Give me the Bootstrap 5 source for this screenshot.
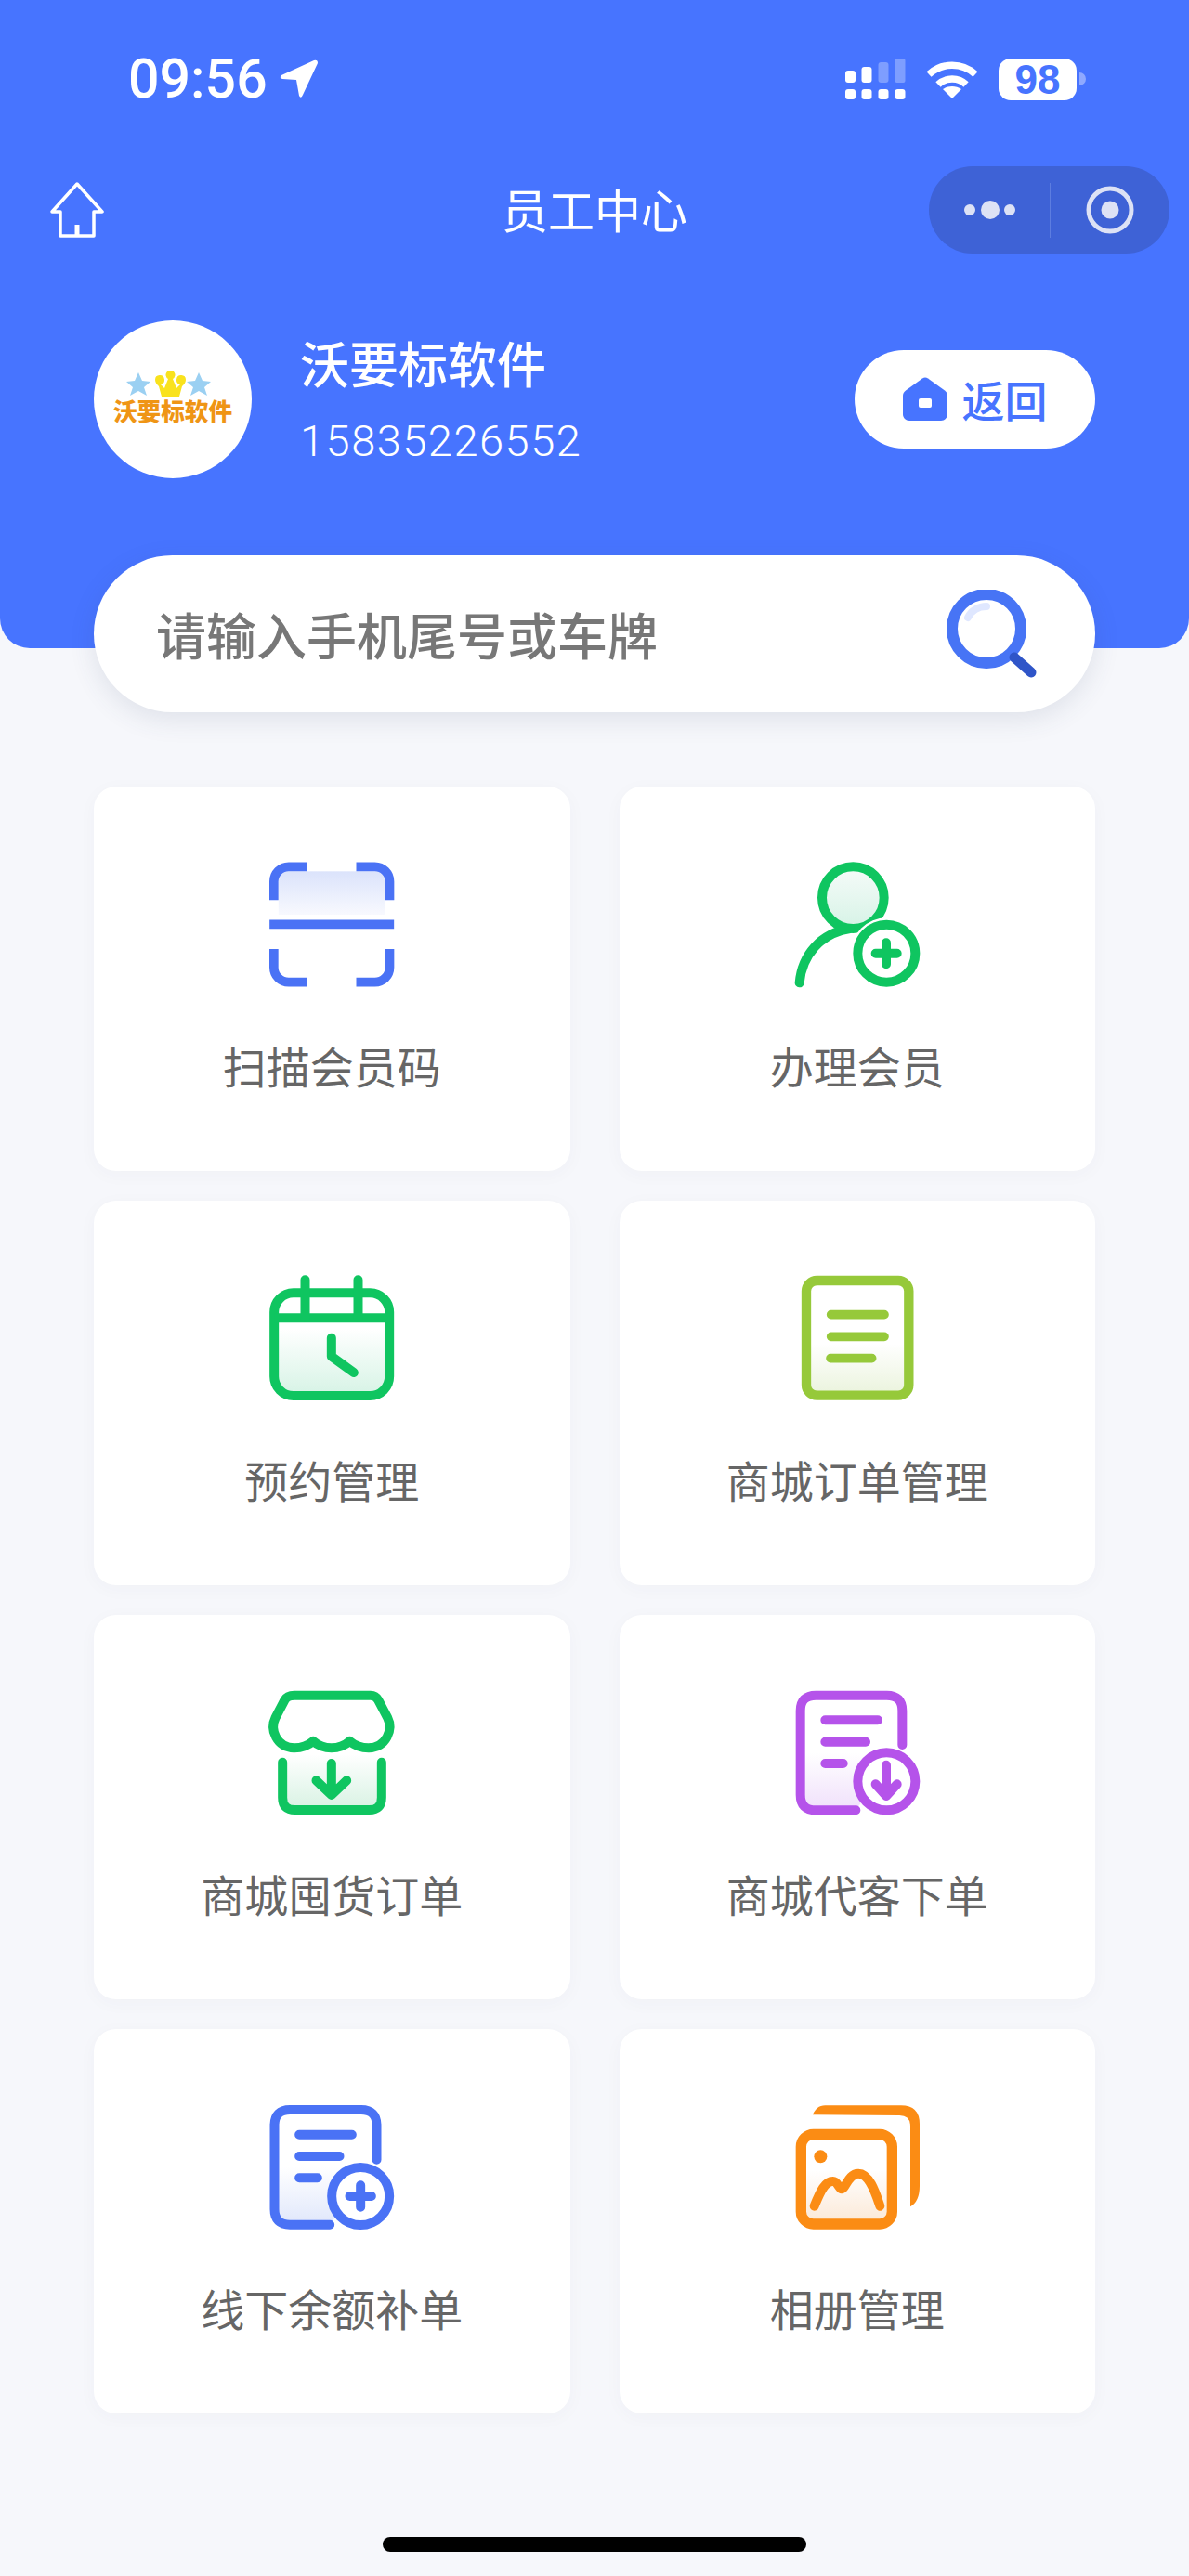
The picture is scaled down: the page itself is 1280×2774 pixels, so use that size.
<!doctype html>
<html lang="zh-CN">
<head>
    <meta charset="utf-8">
    <meta name="viewport" content="width=device-width, initial-scale=1">
    <title>员工中心</title>
    <link href="https://cdn.jsdelivr.net/npm/bootstrap@5.3.3/dist/css/bootstrap.min.css" rel="stylesheet">
    <style>
        body {
            background-color: #f6f7fb;
            font-family: "Noto Sans CJK SC", "Liberation Sans", sans-serif;
        }
        .top-panel {
            height: 698px;
            background-color: #4774ff;
            border-radius: 0 0 32px 32px;
            color: #fff;
        }
        /* status bar */
        .status-row {
            height: 50px;
            padding: 60px 111px 0 138px;
            box-sizing: content-box;
        }
        .status-time {
            font-family: Roboto, "Liberation Sans", sans-serif;
            font-weight: 500;
            font-size: 59px;
            line-height: 50px;
        }
        .status-arrow {
            margin-left: 13px;
        }
        .status-gap {
            margin-right: 21px;
        }
        .battery-body {
            width: 84px;
            height: 45px;
            background-color: #fff;
            border-radius: 13px;
            color: #4774ff;
            font-family: "Liberation Sans", sans-serif;
            font-weight: 700;
            font-size: 44px;
            line-height: 45px;
            text-align: center;
        }
        .battery-nub {
            width: 7px;
            height: 14px;
            margin-left: 3px;
            border-radius: 0 7px 7px 0;
            background-color: #8fa9ff;
        }
        /* title row */
        .title-row {
            display: grid;
            grid-template-columns: 1fr auto 1fr;
            align-items: center;
            height: 94px;
            margin-top: 69px;
            padding: 0 21px;
        }
        .back-home {
            margin-left: 33px;
        }
        .page-title {
            font-size: 50px;
            line-height: 60px;
            padding-bottom: 5px;
        }
        .mini-capsule {
            justify-self: end;
            width: 259px;
            height: 94px;
            background-color: #3e62d6;
            border-radius: 47px;
        }
        /* profile */
        .profile-row {
            height: 170px;
            margin-top: 72px;
            padding: 0 101px;
        }
        .avatar-disc {
            width: 170px;
            height: 170px;
            padding-bottom: 6px;
            background-color: #fff;
            border-radius: 50%;
            color: #ef9515;
            overflow: hidden;
        }
        .avatar-word {
            font-weight: 900;
            font-size: 25.6px;
            line-height: 26px;
            white-space: nowrap;
        }
        .profile-text {
            margin-left: 52px;
        }
        .profile-name {
            font-size: 53px;
            font-weight: 500;
            line-height: 64px;
        }
        .profile-phone {
            font-family: Roboto, "Liberation Sans", sans-serif;
            font-weight: 300;
            font-size: 47px;
            letter-spacing: 1.500px;
            line-height: 56px;
            margin-top: 25px;
        }
        .back-pill {
            width: 259px;
            height: 106px;
            background-color: #fff;
            border-radius: 53px;
            color: #4774ff;
            font-size: 46px;
            font-weight: 500;
            line-height: 1;
            padding: 0 0 2px;
            border: 0;
        }
        .back-pill:hover, .back-pill:active {
            background-color: #fff !important;
            color: #4774ff !important;
        }
        /* search */
        .search-box {
            height: 169px;
            margin: -100px 101px 0;
            padding: 0 61px 0 67px;
            background-color: #fff;
            border-radius: 85px;
            box-shadow: 0 8px 28px rgba(60, 70, 110, .12);
        }
        .search-input {
            border: 0;
            outline: 0;
            background: transparent;
            font-size: 54px;
            font-weight: 500;
            color: #777;
            padding: 0;
        }
        .search-input::placeholder {
            color: #777;
            opacity: 1;
        }
        /* menu */
        .menu-wrap {
            margin-top: 80px;
            padding: 0 101px;
        }
        .menu-grid {
            --bs-gutter-x: 53px;
            --bs-gutter-y: 32px;
        }
        .menu-card {
            height: 414px;
            border: 0;
            border-radius: 24px;
            padding-top: 43px;
            box-shadow: 0 4px 20px rgba(60, 70, 110, .03);
        }
        .menu-icon {
            display: block;
            width: 240px;
            height: 200px;
            margin: 0 auto;
        }
        .menu-label {
            margin-top: 27px;
            font-size: 47px;
            line-height: 60px;
            color: #666;
        }
        .home-indicator {
            width: 456px;
            height: 16px;
            margin: 133px auto 0;
            background-color: #000;
            border-radius: 8px;
        }
    </style>
</head>
<body>
    <header class="top-panel">
        <div class="status-row d-flex justify-content-between align-items-center">
            <div class="d-flex align-items-center">
                <span class="status-time">09:56</span>
                <svg class="status-arrow" width="41" height="42" viewBox="0 0 41 42"><path d="M37 1 2 17Q-1 20 3 21L18 22 21 39Q23 43 25 38L41 4Q41 0 37 1Z" fill="#fff"/></svg>
            </div>
            <div class="d-flex align-items-center">
                <svg width="65" height="44" viewBox="0 0 65 44" class="status-gap">
                    <g fill="#fff">
                        <rect x="0" y="13" width="11" height="13" rx="3"/><rect x="17.500" y="9" width="11" height="17" rx="3"/>
                        <rect x="35.500" y="4" width="11" height="22" rx="3" opacity=".3"/><rect x="53.500" y="0" width="11" height="26" rx="2" opacity=".3"/>
                        <rect x="0" y="33" width="11" height="11" rx="3"/><rect x="17.500" y="33" width="11" height="11" rx="3"/>
                        <rect x="35.500" y="33" width="11" height="11" rx="3"/><rect x="53.500" y="33" width="11" height="11" rx="3"/>
                    </g>
                </svg>
                <svg width="58" height="42" viewBox="0 0 58 42" class="status-gap">
                    <path d="M4 16C18 3 40 3 54 16M14 27C22 19 36 19 44 27" fill="none" stroke="#fff" stroke-width="7.500"/>
                    <path d="M29 42 19 32C25 28 33 28 39 32z" fill="#fff"/>
                </svg>
                <div class="battery-body">98</div>
                <div class="battery-nub"></div>
            </div>
        </div>

        <div class="title-row">
            <svg class="back-home" width="58" height="60" viewBox="0 0 58 60" fill="none" stroke="#fff" stroke-width="3.500" stroke-linejoin="round">
                <path d="M29 2 56 32H47V58H11V32H2z"/>
                <path d="M29 46V57" stroke-width="5"/>
            </svg>
            <div class="page-title">员工中心</div>
            <div class="mini-capsule">
                <svg class="d-block" width="259" height="94" viewBox="0 0 259 94">
                    <g fill="#dde2f5">
                        <circle cx="44" cy="47" r="6"/><circle cx="66" cy="47" r="10"/><circle cx="87" cy="47" r="6"/>
                        <circle cx="195" cy="47" r="9.500"/>
                    </g>
                    <rect x="130" y="18" width="1" height="59" fill="#5d7de0"/>
                    <circle cx="195" cy="47" r="23" fill="none" stroke="#dde2f5" stroke-width="5"/>
                </svg>
            </div>
        </div>

        <div class="profile-row d-flex align-items-center">
            <div class="avatar-disc d-flex flex-column align-items-center justify-content-center flex-shrink-0">
                <svg class="d-block" width="128" height="30" viewBox="0 0 128 30">
                    <path d="M27 2 31 11 40 12 33 18 36 27 27 22 18 27 21 18 14 12 23 11z" fill="#9bd0f2"/>
                    <path d="M92 2 96 11 105 12 98 18 101 27 92 22 83 27 86 18 79 12 88 11z" fill="#9bd0f2"/>
                    <path d="M45 10a5 5 0 1 1 6 5l4 4 4-10a5 5 0 1 1 5 0l4 10 4-4a5 5 0 1 1 6-5c0 3-2 5-4 7l-3 11H52l-3-11c-2-2-4-4-4-7z" fill="#f9e21d"/>
                </svg>
                <span class="avatar-word">沃要标软件</span>
            </div>
            <div class="profile-text flex-grow-1">
                <div class="profile-name">沃要标软件</div>
                <div class="profile-phone">15835226552</div>
            </div>
            <button type="button" class="btn back-pill d-flex align-items-center justify-content-center gap-3 flex-shrink-0">
                <svg width="48" height="48" viewBox="0 0 48 48">
                    <path d="M21 2.500 3 15.500C1 17 0 19 0 21V41c0 4 3 7 7 7H41c4 0 7-3 7-7V21c0-2-1-4-3-5.500L27 2.500c-2-1.300-4-1.300-6 0z" fill="#4774ff"/>
                    <rect x="17" y="24" width="14" height="10" rx="2" fill="#fff"/>
                </svg>
                <span>返回</span>
            </button>
        </div>
    </header>

    <form class="search-box d-flex align-items-center position-relative">
        <input class="search-input flex-grow-1" type="text" placeholder="请输入手机尾号或车牌">
        <svg width="100" height="96" viewBox="0 0 100 96" class="flex-shrink-0">
            <path d="M24 30C28 22 36 18 44 18" fill="none" stroke="#dfe7ff" stroke-width="8" stroke-linecap="round"/>
            <circle cx="44" cy="42" r="37" fill="none" stroke="#4774f5" stroke-width="12"/>
            <path d="M74 73 92 89" stroke="#2f55c8" stroke-width="11" stroke-linecap="round"/>
        </svg>
    </form>

    <main class="menu-wrap">
        <div class="row menu-grid">
            <div class="col-6">
                <div class="card menu-card text-center">
                    <svg class="menu-icon" viewBox="-7.500 0 720 600">
                        <defs>
                            <linearGradient id="gradScan" x1="0" y1="0" x2="0" y2="1"><stop offset="0" stop-color="#dbe3fb"/><stop offset="1" stop-color="#f8f9fe"/></linearGradient>
                        </defs>
                        <rect x="181" y="145" width="344" height="140" fill="url(#gradScan)"/>
                        <g fill="none" stroke="#4a72f5" stroke-width="29">
                            <path d="M166 238V178a48 48 0 0 1 48-48H274"/>
                            <path d="M540 238V178a48 48 0 0 0-48-48H432"/>
                            <path d="M166 396V455a48 48 0 0 0 48 48H274"/>
                            <path d="M540 396V455a48 48 0 0 1-48 48H432"/>
                            <path d="M152 316H554"/>
                        </g>
                    </svg>
                    <div class="menu-label">扫描会员码</div>
                </div>
            </div>
            <div class="col-6">
                <div class="card menu-card text-center">
                    <svg class="menu-icon" viewBox="9 0 720 600">
                        <defs>
                            <linearGradient id="gradHead" x1="0" y1="0" x2="0" y2="1"><stop offset="0" stop-color="#f6fbf9"/><stop offset="1" stop-color="#d6f3e6"/></linearGradient>
                        </defs>
                        <g fill="none" stroke="#0fc560" stroke-width="30" stroke-linecap="round">
                            <circle cx="355" cy="230" r="100" fill="url(#gradHead)"/>
                            <path d="M182 505C190 415 250 345 345 330"/>
                        </g>
                        <circle cx="463" cy="410" r="115" fill="#fff"/>
                        <g fill="none" stroke="#0fc560" stroke-width="30" stroke-linecap="round">
                            <circle cx="463" cy="410" r="93"/>
                            <path d="M428 410H497M462 376V445"/>
                        </g>
                    </svg>
                    <div class="menu-label">办理会员</div>
                </div>
            </div>
            <div class="col-6">
                <div class="card menu-card text-center">
                    <svg class="menu-icon" viewBox="-7.500 -9 720 600">
                        <defs>
                            <linearGradient id="gradCal" x1="0" y1="0" x2="0" y2="1"><stop offset=".35" stop-color="#fff"/><stop offset="1" stop-color="#d6f3e5"/></linearGradient>
                        </defs>
                        <g fill="none" stroke="#0fc560" stroke-width="30" stroke-linecap="round" stroke-linejoin="round">
                            <rect x="167" y="160" width="372" height="332" rx="62" fill="url(#gradCal)"/>
                            <path d="M167 241H539" stroke-linecap="butt"/>
                            <path d="M267 118V240M438 118V240"/>
                            <path d="M352 305V365L424 417"/>
                        </g>
                    </svg>
                    <div class="menu-label">预约管理</div>
                </div>
            </div>
            <div class="col-6">
                <div class="card menu-card text-center">
                    <svg class="menu-icon" viewBox="9 -9 720 600">
                        <defs>
                            <linearGradient id="gradDoc" x1="0" y1="0" x2="0" y2="1"><stop offset=".55" stop-color="#fff"/><stop offset="1" stop-color="#eaf3dc"/></linearGradient>
                        </defs>
                        <rect x="204" y="120" width="331" height="371" rx="34" fill="url(#gradDoc)" stroke="#96c93a" stroke-width="31"/>
                        <path d="M284 230H456M284 301H456M282 371H416" fill="none" stroke="#96c93a" stroke-width="29" stroke-linecap="round"/>
                    </svg>
                    <div class="menu-label">商城订单管理</div>
                </div>
            </div>
            <div class="col-6">
                <div class="card menu-card text-center">
                    <svg class="menu-icon" viewBox="-7.500 -21 720 600">
                        <defs>
                            <linearGradient id="gradShop" x1="0" y1="0" x2="0" y2="1"><stop offset="0" stop-color="#fff"/><stop offset="1" stop-color="#d8f2e3"/></linearGradient>
                        </defs>
                        <path d="M194 300H514V440Q514 480 474 480H234Q194 480 194 440z" fill="url(#gradShop)"/>
                        <g fill="none" stroke="#0fc560" stroke-width="30" stroke-linecap="round" stroke-linejoin="round">
                            <path d="M232 110H478Q495 110 503 125L533 182C552 220 530 278 472 280C445 280 425 270 411 258C395 272 375 280 352 280C329 280 309 272 293 258C279 270 259 280 232 280C174 278 152 220 171 182L201 125Q209 110 232 110Z" fill="#fff"/>
                            <path d="M194 326V440Q194 480 234 480H474Q514 480 514 440V326"/>
                            <path d="M352 330V430M303 385 352 432 401 385"/>
                        </g>
                    </svg>
                    <div class="menu-label">商城囤货订单</div>
                </div>
            </div>
            <div class="col-6">
                <div class="card menu-card text-center">
                    <svg class="menu-icon" viewBox="9 -21 720 600">
                        <defs>
                            <linearGradient id="gradPurple" x1="0" y1="0" x2="0" y2="1"><stop offset=".5" stop-color="#fff"/><stop offset="1" stop-color="#f0e0fb"/></linearGradient>
                        </defs>
                        <g fill="none" stroke="#b553ea" stroke-width="30" stroke-linecap="round" stroke-linejoin="round">
                            <path d="M364 481H235Q185 481 185 431V160Q185 110 235 110H464Q514 110 514 160V270" fill="url(#gradPurple)" stroke="none"/>
                            <path d="M364 481H235Q185 481 185 431V160Q185 110 235 110H464Q514 110 514 160V270"/>
                            <path d="M265 190H435M265 260H396M265 330H323"/>
                            <circle cx="463" cy="388" r="93" fill="#fff"/>
                            <path d="M462 335V430M428 397 462 435 497 397"/>
                        </g>
                    </svg>
                    <div class="menu-label">商城代客下单</div>
                </div>
            </div>
            <div class="col-6">
                <div class="card menu-card text-center">
                    <svg class="menu-icon" viewBox="-7.500 -33 720 600">
                        <defs>
                            <linearGradient id="gradBlue" x1="0" y1="0" x2="0" y2="1"><stop offset=".5" stop-color="#fff"/><stop offset="1" stop-color="#e0e7fb"/></linearGradient>
                        </defs>
                        <g fill="none" stroke="#4a72f5" stroke-width="30" stroke-linecap="round" stroke-linejoin="round">
                            <path d="M347 470H218Q168 470 168 420V149Q168 99 218 99H448Q498 99 498 149V260" fill="url(#gradBlue)" stroke="none"/>
                            <path d="M347 470H218Q168 470 168 420V149Q168 99 218 99H448Q498 99 498 149V260"/>
                            <path d="M248 179H418M248 249H378M248 319H307"/>
                            <circle cx="446" cy="378" r="93" fill="#fff"/>
                            <path d="M411 378H481M446 343V413"/>
                        </g>
                    </svg>
                    <div class="menu-label">线下余额补单</div>
                </div>
            </div>
            <div class="col-6">
                <div class="card menu-card text-center">
                    <svg class="menu-icon" viewBox="9 -33 720 600">
                        <defs>
                            <linearGradient id="gradOrange" x1="0" y1="0" x2="0" y2="1"><stop offset=".4" stop-color="#fff"/><stop offset="1" stop-color="#fbe8d6"/></linearGradient>
                        </defs>
                        <path d="M225 115C232 97 245 85 265 85H510Q570 85 570 145V345Q570 395 540 412V152Q540 117 505 117z" fill="#fb8c14"/>
                        <rect x="187" y="178" width="294" height="290" rx="40" fill="url(#gradOrange)" stroke="#fb8c14" stroke-width="34"/>
                        <circle cx="250" cy="250" r="21" fill="#fb8c14"/>
                        <path d="M230 410C250 360 265 330 290 330C305 330 310 355 318 355C330 355 340 305 372 305C410 305 430 375 442 410" fill="none" stroke="#fb8c14" stroke-width="30" stroke-linecap="round" stroke-linejoin="round"/>
                    </svg>
                    <div class="menu-label">相册管理</div>
                </div>
            </div>
        </div>
        <div class="home-indicator"></div>
    </main>

    <script src="https://cdn.jsdelivr.net/npm/bootstrap@5.3.3/dist/js/bootstrap.bundle.min.js"></script>
</body>
</html>
